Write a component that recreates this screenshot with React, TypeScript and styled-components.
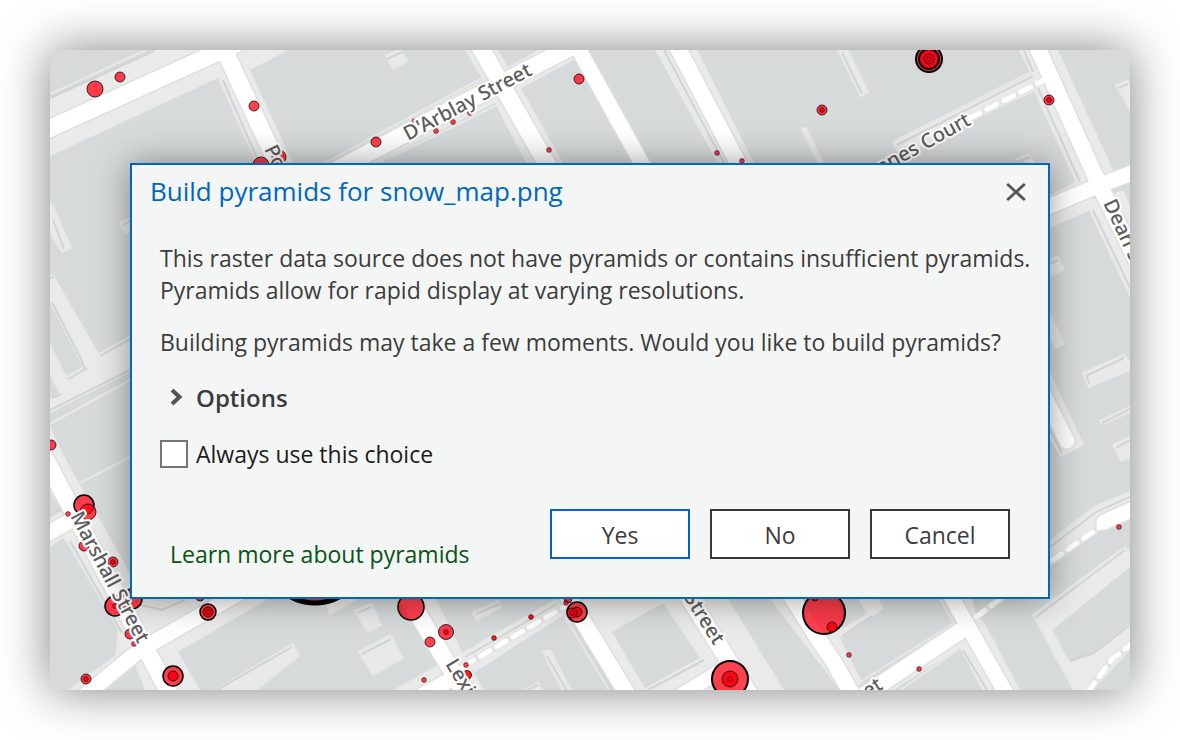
import React from "react";
import styled, { createGlobalStyle } from "styled-components";

const GlobalStyle = createGlobalStyle`
  *, *::before, *::after { box-sizing: border-box; }
  body {
    margin: 0;
    background: #ffffff;
    font-family: "Open Sans", "Noto Sans", sans-serif;
  }
`;

const Page = styled.main`
  display: flex;
  min-height: 100vh;
  padding: 50px;
`;

const MapFrame = styled.section`
  position: relative;
  flex: 1;
  display: flex;
  flex-direction: column;
  justify-content: center;
  padding: 113px 80px 91px;
  background: #d6dadb;
  border-radius: 4px;
  box-shadow: 0 0 50px rgba(0, 0, 0, 0.5);
`;

const MapCanvas = styled.svg`
  position: absolute;
  inset: 0;
  width: 100%;
  height: 100%;
  border-radius: 4px;
`;

const StreetLabel = styled.text`
  font-family: "Noto Sans", sans-serif;
  font-size: 20px;
  font-weight: 500;
  fill: #5c5c5c;
  stroke: #ffffff;
  stroke-width: 4px;
  stroke-linejoin: round;
  paint-order: stroke;
`;

const Dialog = styled.div`
  position: relative;
  display: flex;
  flex-direction: column;
  width: 100%;
  background: #f4f6f5;
  border: 2px solid #0067bd;
  box-shadow: 0 0 32px rgba(0, 0, 0, 0.4);
  color: #3c3c3c;
  font-size: 23px;
  line-height: 32px;
`;

const TitleBar = styled.header`
  display: flex;
  align-items: center;
  justify-content: space-between;
  height: 52px;
  padding: 0 18px;
`;

const Title = styled.h1`
  margin: 0;
  font-size: 26px;
  line-height: 36px;
  font-weight: 400;
  color: #0067c0;
`;

const CloseButton = styled.button`
  display: flex;
  padding: 6px 4px 4px;
  border: 0;
  background: transparent;
  color: #555555;
  cursor: pointer;
`;

const Content = styled.div`
  display: flex;
  flex-direction: column;
  align-items: flex-start;
  padding: 25px 10px 0 28px;
`;

const Message = styled.p`
  margin: 0 0 20px;
`;

const OptionsToggle = styled.button`
  display: flex;
  align-items: center;
  gap: 12px;
  margin: 4px 0 24px;
  padding: 0 0 0 9px;
  border: 0;
  background: transparent;
  color: inherit;
  font: inherit;
  font-size: 24px;
  font-weight: 600;
  cursor: pointer;
`;

const CheckLabel = styled.label`
  display: flex;
  align-items: center;
  gap: 8px;
  color: #1c1c1c;
`;

const Checkbox = styled.input`
  appearance: none;
  width: 28px;
  height: 28px;
  margin: 0;
  border: 2px solid #767676;
  background: #ffffff;
  &:checked { background: #0067c0; }
`;

const Footer = styled.footer`
  display: flex;
  align-items: flex-end;
  justify-content: space-between;
  padding: 39px 38px 38px;
`;

const HelpLink = styled.a`
  line-height: 26px;
  margin-bottom: -8px;
  color: #0a5218;
  text-decoration: none;
`;

const Actions = styled.div`
  display: flex;
  gap: 20px;
`;

const ActionButton = styled.button<{ $primary?: boolean }>`
  width: 140px;
  height: 50px;
  padding: 2px 0 0;
  border: 2px solid ${(p) => (p.$primary ? "#0062d2" : "#383838")};
  background: #ffffff;
  color: #3c3c3c;
  font: inherit;
  line-height: 32px;
  cursor: pointer;
`;

/* Light pavement areas and courtyards */
const pavements = [
  "50,98 155,50 288,50 250,70 296,170 262,170 218,78 50,156",
  "465,50 498,50 508,68 541,50 590,50 572,61 521,88 564,165 527,165 495,103 386,158 380,168 320,168 483,80",
  "655,50 697,50 755,165 719,165",
  "893,143 1031,74 1020,50 1058,50 1114,172 1095,190 1050,200 1077,183 1035,91 970,122 900,158",
  "1050,213 1090,197 1100,200 1130,263 1130,297 1090,210 1050,228",
  "1108,196 1123,190 1130,205 1130,240",
  "1050,372 1084,445 1061,457 1050,440",
  "1050,543 1095,508 1130,492 1130,515 1100,530 1050,567",
  "1033,615 1125,547 1130,553 1130,567 1052,630 1070,662 1093,653 1130,623 1130,650 1093,690 1075,690",
  "940,599 972,599 976,615 984,622 1020,690 983,690 960,648 893,690 865,690 873,680 957,620",
  "770,599 878,599 884,609 840,638 862,682 855,690 840,690",
  "560,599 728,599 784,690 612,690",
  "458,655 556,599 578,606 475,672",
  "422,599 436,599 462,652 472,670 484,690 395,690 440,665",
  "50,427 66,460 130,573 160,599 268,599 178,652 200,690 145,690 135,665 100,690 67,690 115,657 118,630 64,537 50,547",
  "50,275 53,274 99,354 130,336 130,372 50,413 50,400 60,394 50,373 50,345 67,377 85,368 50,300",
];

const courtyards = [
  "386,56 399,49 408,61 393,69",
  "838,50 848,50 868,92 861,96",
  "802,129 806,128 824,165 819,165",
  "1116,85 1127,81 1132,84 1132,113",
  "1017,159 1029,154 1035,165",
  "1048,260 1058,257 1064,270 1048,277",
  "1048,310 1064,344 1056,348 1048,335",
  "1083,373 1124,355 1132,364 1132,369 1089,387",
  "1100,421 1132,406 1132,411 1102,424",
  "1113,445 1132,436 1132,457 1121,461",
  "472,613 498,601 501,607 477,620",
  "543,652 550,650 572,692 563,692",
  "522,692 538,683 543,692",
  "355,611 371,604 381,625 368,632",
  "359,652 390,635 403,658 373,675",
  "325,597 330,614 360,597",
  "212,692 293,644 299,656 253,692",
  "48,203 52,204 71,248 62,252 48,228",
  "120,223 134,217 134,230 125,233",
];

/* City blocks lying inside a pavement area */
const blocks = [
  "612,632 663,603 700,658 645,688",
  "837,599 858,599 867,614 842,630",
  "50,492 62,511 50,518",
  "272,599 300,599 255,620 225,640",
];

const highlights = [
  "M50 94L146 50",
  "M325 163L484 77",
  "M469 50L484 77",
  "M219 78L257 163",
  "M50 424L130 380",
  "M80 483L132 456",
  "M893 142L1031 72L1020 50",
  "M893 142L898 152",
  "M1035 91L1077 183L1050 196",
  "M1090 210L1132 300",
  "M1048 543L1094 507L1132 491",
  "M1033 615L1125 547L1130 553",
  "M1033 615L1075 692",
  "M50 345L66 377L84 367L50 300",
  "M99 354L132 335",
  "M50 373L60 393L50 400",
  "M64 537L120 630L116 656L67 692",
  "M140 600L163 606L182 598",
  "M439 665L395 690",
  "M460 655L557 600",
  "M565 617L610 692",
  "M657 688L702 660L666 603",
  "M838 632L868 614L862 599",
  "M862 681L900 657L954 623",
  "M961 648L983 690",
  "M940 599L953 622",
  "M500 103L535 165",
  "M660 50L722 165",
  "M508 68L541 50",
  "M387 159L497 105",
  "M812 635L843 692",
  "M900 690L958 650",
];

const shades = [
  "M50 98L154 51",
  "M329 165L487 81",
  "M223 80L259 163",
  "M510 70L546 51",
  "M897 145L1033 76",
  "M1024 50L1033 72",
  "M387 59L402 52",
  "M842 52L862 94",
  "M1118 88L1128 84",
  "M1020 161L1030 157",
  "M1050 264L1058 260",
  "M1086 376L1124 358",
  "M1086 376L1090 384",
  "M1102 423L1130 409",
  "M1116 448L1130 440",
  "M1050 547L1096 512L1130 497",
  "M1036 617L1125 550",
  "M1070 661L1094 653L1130 625",
  "M1038 88L1080 182",
  "M1093 210L1132 292",
  "M50 410L130 370",
  "M100 356L130 339",
  "M68 379L86 369L82 363",
  "M52 398L61 394",
  "M52 302L83 363",
  "M53 220L64 249",
  "M50 279L54 276",
  "M123 225L130 221",
  "M141 605L162 610L185 600",
  "M70 541L122 633",
  "M215 691L292 647",
  "M358 613L371 607",
  "M362 654L391 639",
  "M476 614L499 604",
  "M547 656L567 691",
  "M465 657L557 604",
  "M568 615L614 691",
  "M526 691L538 685",
  "M704 660L648 690",
  "M842 636L872 616",
  "M943 599L956 621",
  "M963 650L987 690",
  "M664 50L725 165",
  "M975 602L985 598",
  "M1050 430L1062 453",
  "M50 515L62 508",
];

const roads: { d: string; w: number }[] = [
  { d: "M40 133L240 42", w: 17 },
  { d: "M222 45L285 180", w: 17 },
  { d: "M340 168L590 37", w: 17 },
  { d: "M471 31L556 180", w: 17 },
  { d: "M569 32L651 180", w: 15 },
  { d: "M669 31L747 180", w: 16 },
  { d: "M1030 31L1098 182L1142 272", w: 16 },
  { d: "M1038 211L1095 187L1145 168", w: 15 },
  { d: "M1035 378L1067 441", w: 15 },
  { d: "M30 430L173 700", w: 17 },
  { d: "M40 538L82 514", w: 15 },
  { d: "M72 706L140 650L262 580", w: 15 },
  { d: "M398 580L475 710", w: 17 },
  { d: "M400 708L462 673", w: 15 },
  { d: "M567 595L637 710", w: 16 },
  { d: "M680 583L758 708", w: 17 },
  { d: "M675 699L730 665", w: 14 },
  { d: "M780 578L815 634L835 664L858 705", w: 16 },
  { d: "M842 710L965 628", w: 16 },
  { d: "M943 582L1013 706", w: 15 },
  { d: "M1104 522L1140 506", w: 15 },
];

const paths = [
  "M464 666L572 602",
  "M970 118L1046 79",
  "M976 617L1054 559L1100 527",
  "M1088 692L1112 659L1134 642",
];

type Dot = { x: number; y: number; r: number; solid?: boolean; line?: number };

const dots: Dot[] = [
  { x: 95, y: 89, r: 8 }, { x: 120, y: 77, r: 5 }, { x: 254, y: 106, r: 5 },
  { x: 376, y: 142, r: 5 }, { x: 261, y: 165, r: 8 }, { x: 279, y: 157, r: 7 },
  { x: 414, y: 121, r: 2 },
  { x: 579, y: 79, r: 5 }, { x: 549, y: 150, r: 2.4 }, { x: 436, y: 131, r: 2.4 },
  { x: 453, y: 122, r: 2.4 }, { x: 470, y: 113, r: 2.4 }, { x: 717, y: 153, r: 2.4 },
  { x: 742, y: 161, r: 2.4 },
  { x: 929, y: 59, r: 13, line: 2 }, { x: 929, y: 59, r: 10, solid: true, line: 2 },
  { x: 929, y: 59, r: 5, solid: true }, { x: 929, y: 59, r: 2.4, solid: true },
  { x: 822, y: 110, r: 5 }, { x: 822, y: 110, r: 2.4, solid: true },
  { x: 1049, y: 100, r: 5 }, { x: 1049, y: 100, r: 2.4, solid: true },
  { x: 51, y: 445, r: 5 },
  { x: 84, y: 505, r: 10, line: 1.5 }, { x: 88, y: 512, r: 8 },
  { x: 68, y: 514, r: 2.4 }, { x: 84, y: 546, r: 5 },
  { x: 113, y: 562, r: 5 }, { x: 113, y: 562, r: 2.4, solid: true },
  { x: 115, y: 606, r: 10, line: 1.5 }, { x: 115, y: 606, r: 2.4 },
  { x: 132, y: 599, r: 10, line: 1.5 }, { x: 124, y: 606, r: 2.4 },
  { x: 130, y: 634, r: 5 }, { x: 134, y: 644, r: 2.4 },
  { x: 86, y: 679, r: 5 }, { x: 86, y: 679, r: 2.4, solid: true },
  { x: 173, y: 676, r: 10, line: 1.5 }, { x: 173, y: 676, r: 5, solid: true },
  { x: 200, y: 597, r: 4 },
  { x: 208, y: 612, r: 8, line: 1.5 }, { x: 208, y: 612, r: 5, solid: true }, { x: 208, y: 612, r: 2.4, solid: true },
  { x: 315, y: 552, r: 51, line: 5 },
  { x: 411, y: 607, r: 13, line: 1.5 },
  { x: 446, y: 632, r: 7.5 }, { x: 446, y: 632, r: 2.4, solid: true },
  { x: 430, y: 642, r: 5 }, { x: 466, y: 665, r: 2.4 }, { x: 467, y: 675, r: 4.5, solid: true },
  { x: 424, y: 680, r: 2.4 }, { x: 531, y: 617, r: 2.4, solid: true }, { x: 494, y: 638, r: 2.4, solid: true },
  { x: 568, y: 599, r: 4 }, { x: 566, y: 603, r: 2.4 },
  { x: 577, y: 612, r: 10, line: 1.5 }, { x: 577, y: 612, r: 5, solid: true },
  { x: 572, y: 613, r: 5 }, { x: 572, y: 613, r: 2.4 },
  { x: 730, y: 679, r: 18, line: 2 }, { x: 730, y: 679, r: 8, solid: true }, { x: 730, y: 679, r: 2.4, solid: true },
  { x: 824, y: 613, r: 21, line: 2 }, { x: 832, y: 627, r: 5, solid: true }, { x: 815, y: 598, r: 3, solid: true },
  { x: 849, y: 655, r: 2.4 }, { x: 919, y: 669, r: 2.4 }, { x: 1119, y: 527, r: 2.4 },
];

const labels: { text: string; x: number; y: number; angle: number; end?: boolean }[] = [
  { text: "D'Arblay Street", x: 408, y: 141, angle: -28 },
  { text: "St Annes Court", x: 972, y: 124, angle: -29, end: true },
  { text: "Poland Street", x: 264, y: 149, angle: 64 },
  { text: "Dean Street", x: 1103, y: 203, angle: 65 },
  { text: "Marshall Street", x: 70, y: 516, angle: 62 },
  { text: "Lexington Street", x: 445, y: 664, angle: 59 },
  { text: "Street", x: 714, y: 646, angle: 58, end: true },
  { text: "Street", x: 884, y: 688, angle: -33, end: true },
];

function StreetMap() {
  return (
    <MapCanvas viewBox="50 50 1080 640" preserveAspectRatio="xMidYMid slice" aria-hidden="true">
      <g fill="#eaeaea">
        {pavements.map((p) => <polygon key={p} points={p} />)}
      </g>
      <g fill="#e9e9e9" stroke="#e6e8e8" strokeWidth="2">
        {courtyards.map((p) => <polygon key={p} points={p} />)}
      </g>
      <g fill="#d6dadb">
        {blocks.map((p) => <polygon key={p} points={p} />)}
      </g>
      <g fill="none" stroke="#e7e9e9" strokeWidth="2">
        {highlights.map((d) => <path key={d} d={d} />)}
      </g>
      <g fill="none" stroke="#d1d3d4" strokeWidth="2">
        {shades.map((d) => <path key={d} d={d} />)}
      </g>
      <g fill="none" stroke="#dfe0dd" strokeLinecap="round">
        {roads.map((r) => <path key={r.d} d={r.d} strokeWidth={r.w + 3} />)}
        {paths.map((d) => <path key={d} d={d} strokeWidth="7" stroke="#e4e5e3" />)}
      </g>
      <g fill="none" stroke="#ffffff" strokeLinecap="round">
        {roads.map((r) => <path key={r.d} d={r.d} strokeWidth={r.w} />)}
        {paths.map((d) => <path key={d} d={d} strokeWidth="5" strokeDasharray="11 8" />)}
      </g>
      {dots.map((c, i) => (
        <circle
          key={i}
          cx={c.x}
          cy={c.y}
          r={c.r}
          fill={c.solid ? "#fa0010" : "#ff0014"}
          fillOpacity={c.solid ? 0.9 : 0.75}
          stroke="#000000"
          strokeOpacity={c.line ? 1 : c.r < 3 ? 0.5 : 0.75}
          strokeWidth={c.line ?? 1}
        />
      ))}
      {labels.map((l) => (
        <StreetLabel
          key={l.text + l.x}
          transform={`translate(${l.x} ${l.y}) rotate(${l.angle})`}
          textAnchor={l.end ? "end" : "start"}
        >
          {l.text}
        </StreetLabel>
      ))}
    </MapCanvas>
  );
}

export default function App() {
  return (
    <>
      <GlobalStyle />
      <Page>
        <MapFrame>
          <StreetMap />
          <Dialog role="dialog" aria-labelledby="dialog-title">
            <TitleBar>
              <Title id="dialog-title">Build pyramids for snow_map.png</Title>
              <CloseButton type="button" aria-label="Close">
                <svg width="20" height="18" viewBox="0 0 20 18" fill="none" stroke="currentColor" strokeWidth="2.8">
                  <path d="M1.2 1L18.8 17M18.8 1L1.2 17" />
                </svg>
              </CloseButton>
            </TitleBar>
            <Content>
              <Message>
                This raster data source does not have pyramids or contains insufficient pyramids.
                <br />
                Pyramids allow for rapid display at varying resolutions.
              </Message>
              <Message>Building pyramids may take a few moments. Would you like to build pyramids?</Message>
              <OptionsToggle type="button" aria-expanded="false">
                <svg width="15" height="18" viewBox="0 0 15 18" fill="none" stroke="#555555" strokeWidth="4">
                  <path d="M3 1L10.5 8L3 15" />
                </svg>
                Options
              </OptionsToggle>
              <CheckLabel htmlFor="always-use">
                <Checkbox id="always-use" type="checkbox" />
                Always use this choice
              </CheckLabel>
            </Content>
            <Footer>
              <HelpLink href="#pyramids">Learn more about pyramids</HelpLink>
              <Actions>
                <ActionButton type="button" $primary>Yes</ActionButton>
                <ActionButton type="button">No</ActionButton>
                <ActionButton type="button">Cancel</ActionButton>
              </Actions>
            </Footer>
          </Dialog>
        </MapFrame>
      </Page>
    </>
  );
}
